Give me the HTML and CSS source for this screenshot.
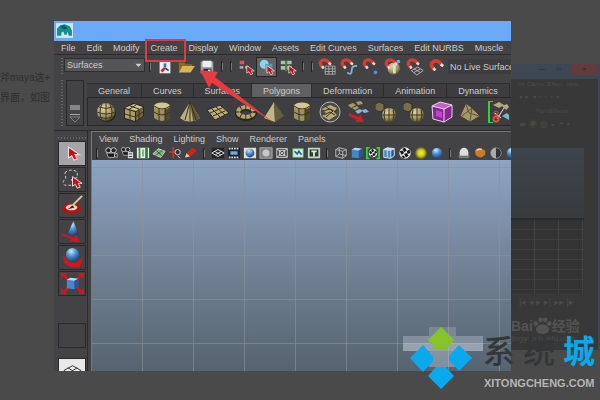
FILE: index.html
```html
<!DOCTYPE html>
<html lang="en">
<head>
    <meta charset="UTF-8">
    <title>Maya Create Menu</title>
    <link rel="stylesheet" href="styles.css">
</head>
<body>

<!-- shared icon shapes -->
<svg class="defs" aria-hidden="true">
    <defs>
        <radialGradient id="gold" cx=".38" cy=".3" r=".8"><stop offset="0" stop-color="#e0d6a4"/><stop offset=".55" stop-color="#a39864"/><stop offset="1" stop-color="#3c361d"/></radialGradient>
        <radialGradient id="blue" cx=".4" cy=".25" r=".8"><stop offset="0" stop-color="#cfe8fb"/><stop offset=".45" stop-color="#4d92d2"/><stop offset="1" stop-color="#173f7c"/></radialGradient>
        <radialGradient id="yellow"><stop offset="0" stop-color="#f4ef22"/><stop offset=".5" stop-color="#d3cf1c"/><stop offset="1" stop-color="#56561f"/></radialGradient>
    </defs>
    <symbol id="cursor" viewBox="0 0 12 14"><path d="M1 1v10l3-2 2 4 3-1-2-4h4z" fill="#c4101c" stroke="#f0dada" stroke-width="1"/></symbol>
    <symbol id="magnet" viewBox="0 0 20 20"><path d="M6 12 3.500 9Q1.500 5 5 3t7 1l3 3" fill="none" stroke="#d83a34" stroke-width="4"/><path d="m5 10 2 3M13 6l3 2" stroke="#e8dede" stroke-width="3"/></symbol>
    <symbol id="sphere" viewBox="0 0 22 22"><ellipse cx="12" cy="13" rx="9" ry="8" fill="#242424"/><circle cx="11" cy="11" r="9" fill="url(#gold)"/><path d="M2 11q9 4 18 0M4 6q7 3 14 0M4 16q7 3 14 0M11 2v18M7 3q-4 8 0 16M15 3q4 8 0 16" fill="none" stroke="#403a20"/></symbol>
    <symbol id="cube" viewBox="0 0 22 22"><path d="M1 7 10 2l11 3v10l-8 6-12-3z" fill="#2a2718"/><path d="m2 7 9-4 9 3-7 4z" fill="#d2c893"/><path d="m2 8 10 3v9L2 17z" fill="#aaa06c"/><path d="m13 11 7-5v9l-7 5z" fill="#6f6740"/><path d="M7 5l9 3v10M11 3M5 9l8-5M7 9v10M2 13l10 3 8-5" fill="none" stroke="#38321c"/></symbol>
    <symbol id="cylinder" viewBox="0 0 22 22"><path d="M3 5v12q8 6 16 0V5z" fill="#9b915f"/><path d="M14 7v13q4-1 5-3V5z" fill="#514a2c"/><ellipse cx="11" cy="5" rx="8" ry="3.500" fill="#d2c893"/><path d="M3 5q8 6 16 0M3 11q8 6 16 0M8 8v12M14 8v12" fill="none" stroke="#38321c"/></symbol>
    <symbol id="cone" viewBox="0 0 22 22"><path d="M11 1 1 17q9 7 20 0z" fill="#b9ae7a"/><path d="M11 1l3 19q5-1 7-3z" fill="#5f5735"/><path d="M11 1 6 19M11 1v19M11 1l6 18" stroke="#38321c"/></symbol>
    <symbol id="plane" viewBox="0 0 22 22"><path d="m0 9 13-5 9 8-14 7z" fill="#b9ae7a" stroke="#2f2a17"/><path d="m4 7 9 9M9 6l9 8M3 12l12-5M6 15l12-5" stroke="#38321c"/></symbol>
    <symbol id="torus" viewBox="0 0 22 22"><ellipse cx="11" cy="12" rx="8" ry="5" fill="none" stroke="#2b2715" stroke-width="6"/><ellipse cx="11" cy="11" rx="8" ry="5" fill="none" stroke="#b2a774" stroke-width="4"/><ellipse cx="11" cy="11" rx="8" ry="5" fill="none" stroke="#38321c" stroke-width="4" stroke-dasharray="1 4"/></symbol>
    <symbol id="pyramid" viewBox="0 0 22 22"><path d="M11 1 1 17l11 4z" fill="#c2b784"/><path d="m11 1 1 20 9-6z" fill="#665e3a"/></symbol>
    <symbol id="ringed" viewBox="0 0 22 22"><circle cx="11" cy="11" r="10" fill="#4c4a42" stroke="#b8b8b8"/><path d="m3 8 8-4 7 3-3 4 3 3-8 5-7-4 4-3z" fill="#b5aa77"/><path d="m4 10 7-2 6 3M5 14l6-3 5 3M7 6l7 4-7 6" fill="none" stroke="#38321c"/></symbol>
    <symbol id="split" viewBox="0 0 22 22"><path d="m1 4 5-2 3 2-5 3zM9 1l5-1 2 3-5 1zM5 7l5-2 2 2-4 2z" fill="#a59a68"/><path d="m8 10 5-2 3 2-5 3zM15 9l4-1 3 3-5 1z" fill="#8ab6cc"/><path d="m2 12 10 4 1-3 4 8h-9l2-2-8-4z" fill="#d51c29"/></symbol>
    <symbol id="merge" viewBox="0 0 22 22"><path d="m0 3 4-2 5 2v6l-4 2-5-2z" fill="#756d4b" stroke="#33301f"/><circle cx="14" cy="14" r="7" fill="url(#gold)"/><path d="M7 14h14M14 7v14M10 9q-2 5 0 10M18 9q2 5 0 10" fill="none" stroke="#403a20"/></symbol>
    <symbol id="purple" viewBox="0 0 22 22"><path d="m1 5 8-4 12 3v12l-8 5-11-3z" fill="#8b2596"/><path d="m1 5 12 3 8-4-12-3z" fill="#bd63c4"/><path d="m1 5 12 3 8-4-12-3zM2 18l11 3V8M13 21l8-5V4M1 5l1 13" fill="none" stroke="#ead5ed"/><path d="m5 9 6 2v6l-6-2z" fill="#bf43cc"/></symbol>
    <symbol id="fold" viewBox="0 0 22 22"><path d="m1 15 6-13 6 5 8 8-10 6z" fill="#a3986a" stroke="#4a432a"/><path d="m3 15 10-8-2 13M7 3l3 9 10 3" fill="none" stroke="#5c5435"/></symbol>
    <symbol id="cut" viewBox="0 0 22 22"><path d="M6 0H2v22h4" fill="none" stroke="#2bd33e" stroke-width="2"/><path d="m6 4 6-3 5 3-5 3zM15 5l5-2 2 3-3 3z" fill="#b5aa77"/><path d="m8 12 6 5M17 7l-7 11" stroke="#ddd"/><circle cx="9" cy="18" r="2.500" fill="none" stroke="#dd5030" stroke-width="2"/><circle cx="9" cy="12" r="2" fill="none" stroke="#dd5030"/><path d="m15 15 5-3 2 2v5z" fill="#7ab4cf"/></symbol>
    <symbol id="camera" viewBox="0 0 16 16"><circle cx="5" cy="5" r="3" fill="#222" stroke="#ddd"/><circle cx="11" cy="5" r="3" fill="#222" stroke="#ddd"/><path d="M3 8h9v5H5zM12 10l3-2v5l-3-1z" fill="#191919" stroke="#bbb"/></symbol>
    <symbol id="checker" viewBox="0 0 16 16"><circle cx="8" cy="8" r="6.500" fill="#e8e8e8"/><path d="m5 3 3-1 2 3-3 2zM10 6l3-2 1 4-3 1zM2 6l3-1 2 3-3 2zM7 9l3-1 2 3-3 2zM4 11l3 0 1 3-2 0z" fill="#161616"/></symbol>
    <symbol id="ball" viewBox="0 0 16 16"><circle cx="8" cy="8" r="6" fill="url(#blue)"/></symbol>
    <symbol id="bluecube" viewBox="0 0 16 16"><path d="m2 4 4-2 8 1v8l-4 3-8-1z" fill="#4687c8"/><path d="m2 4 4-2 8 1-4 2z" fill="#b3d8f5"/><path d="M10 5v9l4-3V3z" fill="#275793"/></symbol>
</svg>

<!-- dimmed page behind the window -->
<div class="backdrop">
    <div class="article" lang="zh">
        <p>斧maya这+</p>
        <p>界面，如图</p>
    </div>
    <div class="back-window">
        <div class="back-title"><i>—</i><i>▭</i><b>×</b></div>
        <div class="back-menu">nts Cache&nbsp; Effect&nbsp; Help</div>
        <div class="back-tools">▪ ▪ &nbsp;▪ ▫ ◦ ▫ ▪</div>
        <div class="back-tab">PaintEffects</div>
        <div class="back-shelf">▰ ◉ ◍ ◒ ◓ ▪</div>
        <div class="back-view"></div>
        <div class="back-graph"></div>
        <div class="back-play">|◂ ◂ ▸ ▸| ▸▸ |▸</div>
        <div class="back-brand" lang="zh">Bai<svg viewBox="0 0 20 20"><ellipse cx="10" cy="14" rx="7" ry="5"/><circle cx="3" cy="8" r="2.500"/><circle cx="8" cy="4" r="2.500"/><circle cx="13" cy="4" r="2.500"/><circle cx="17" cy="8" r="2.500"/></svg>经验</div>
        <div class="back-url">jingyan.baidu.com</div>
    </div>
</div>

<div class="app">
    <div class="titlebar">
        <svg viewBox="0 0 16 14"><path d="M0 0h16v14H0z" fill="#cfe6ec"/><path d="M1 12V5l3-3 4-1 5 2 2 4v5h-3l-1-4-1 3H8L7 8l-2 1v3z" fill="#158e91"/><path d="m4 3 4-1 3 3-4 1z" fill="#085a60"/></svg>
    </div>

    <nav class="menubar">
        <a href="#">File</a><a href="#">Edit</a><a href="#">Modify</a><a href="#" class="create">Create<span class="highlight"></span></a><a href="#">Display</a><a href="#">Window</a><a href="#">Assets</a><a href="#">Edit Curves</a><a href="#">Surfaces</a><a href="#">Edit NURBS</a><a href="#">Muscle</a>
    </nav>

    <div class="toolbar">
        <span class="grip"></span>
        <div class="mode">
            <select aria-label="Menu set"><option>Surfaces</option></select>
            <svg viewBox="0 0 9 6"><path d="M0 1h9L4.500 6z" fill="#d0d0d0"/></svg>
        </div>
        <span class="sep"></span>
        <button aria-label="New scene"><svg viewBox="0 0 20 20"><path d="M4 4h12v13H4z" fill="#eee"/><path d="M10 10V6" stroke="#3472d8" stroke-width="3"/><path d="m10 11-4 4" stroke="#d22" stroke-width="3"/><path d="m10 11 4 3" stroke="#25468a" stroke-width="2"/></svg></button>
        <button aria-label="Open scene"><svg viewBox="0 0 20 20"><path d="M2 15V5h6l2 2h7v3" fill="#8d6b1d"/><path d="m2 16 4-7h14l-5 7z" fill="#d8b455"/></svg></button>
        <button aria-label="Save scene"><svg viewBox="0 0 20 20"><path d="M3 4h14v13H3z" fill="#9ba0a5"/><path d="M5 3h10v7H5z" fill="#eee"/><path d="M6 12h9v5H6z" fill="#25282b"/><path d="M11 13h3v3h-3z" fill="#ddd"/></svg></button>
        <span class="sep"></span><span class="sep"></span>
        <button aria-label="Select by hierarchy"><svg viewBox="0 0 20 20"><path d="M3 3h5v4H3z" fill="#d6565d"/><path d="M3 9h4v3H3zM9 9h4v3H9z" fill="#aaa"/><use href="#cursor" x="10" y="7" width="10" height="13"/></svg></button>
        <button class="active" aria-label="Select by object"><svg viewBox="0 0 20 20"><circle cx="7" cy="7" r="5" fill="#94cfe9"/><path d="m8 7 8-1v8l-8 1z" fill="#4f9cab"/><use href="#cursor" x="9" y="7" width="10" height="13"/></svg></button>
        <button aria-label="Select by component"><svg viewBox="0 0 20 20"><path d="M2 3h5v4H2zM9 3h5v4H9zM2 9h5v4H2zM9 9h5v4H9z" fill="#a9c3a8"/><path d="M7 3h2v12H7z" fill="#45874c"/><use href="#cursor" x="10" y="7" width="10" height="13"/></svg></button>
        <span class="sep"></span><span class="sep"></span>
        <button class="snap" aria-label="Snap to grids"><svg viewBox="0 0 20 20"><path d="M8 9h11v9H8zM12 9v9M16 9v9M8 12h11M8 15h11" fill="none" stroke="#aaa"/><use href="#magnet" width="18" height="18"/></svg></button>
        <button class="snap" aria-label="Snap to curves"><svg viewBox="0 0 20 20"><path d="M8 16q5 4 5-2t6-5" fill="none" stroke="#83b6d8" stroke-width="2"/><use href="#magnet" width="18" height="18"/></svg></button>
        <button class="snap" aria-label="Snap to points"><svg viewBox="0 0 20 20"><circle cx="15" cy="16" r="2" fill="#4c92e0"/><use href="#magnet" width="18" height="18"/></svg></button>
        <button class="snap" aria-label="Snap to centre"><svg viewBox="0 0 20 20"><circle cx="11" cy="12" r="7" fill="url(#gold)"/><path d="M10 5h3v12h-3z" fill="#ddd"/><circle cx="16" cy="4" r="2" fill="#69b5e8"/><use href="#magnet" width="18" height="18"/></svg></button>
        <button class="snap" aria-label="Snap to view planes"><svg viewBox="0 0 20 20"><path d="m6 14 7-4 6 4-7 5zM9 12l7 4M16 12l-7 4" fill="none" stroke="#bbb"/><use href="#magnet" width="18" height="18"/></svg></button>
        <button class="snap" aria-label="Make live"><svg viewBox="0 0 20 20"><use href="#magnet" x="1" y="1" width="20" height="20"/></svg></button>
        <input type="text" aria-label="Live surface" value="No Live Surface" readonly>
    </div>

    <div class="shelf">
        <span class="grip"></span>
        <div class="shelf-side">
            <span class="knob"></span>
            <svg viewBox="0 0 14 8"><path d="M1 1h12L7 7z" fill="none" stroke="#8a8a8a"/></svg>
        </div>
        <div class="shelf-main">
            <div class="tabs">
                <button>General</button><button>Curves</button><button>Surfaces</button><button class="current">Polygons</button><button>Deformation</button><button>Animation</button><button>Dynamics</button>
            </div>
            <div class="shelf-icons">
                <button aria-label="Sphere"><svg><use href="#sphere"/></svg></button>
                <button aria-label="Cube"><svg><use href="#cube"/></svg></button>
                <button aria-label="Cylinder"><svg><use href="#cylinder"/></svg></button>
                <button aria-label="Cone"><svg><use href="#cone"/></svg></button>
                <button aria-label="Plane"><svg><use href="#plane"/></svg></button>
                <button aria-label="Torus"><svg><use href="#torus"/></svg></button>
                <button aria-label="Pyramid"><svg><use href="#pyramid"/></svg></button>
                <button aria-label="Pipe"><svg><use href="#cylinder"/></svg></button>
                <button aria-label="Combine"><svg><use href="#ringed"/></svg></button>
                <button aria-label="Extract"><svg><use href="#split"/></svg></button>
                <button aria-label="Union"><svg><use href="#merge"/></svg></button>
                <button aria-label="Smooth"><svg><use href="#merge"/></svg></button>
                <button aria-label="Bevel"><svg><use href="#purple"/></svg></button>
                <button aria-label="Extrude"><svg><use href="#fold"/></svg></button>
                <button aria-label="Split polygon"><svg><use href="#cut"/></svg></button>
            </div>
        </div>
    </div>

    <div class="workspace">
        <div class="toolbox">
            <span class="grip-row"></span>
            <button class="selected" aria-label="Select"><svg viewBox="0 0 24 24"><use href="#cursor" x="6" y="4" width="15" height="16"/></svg></button>
            <button aria-label="Lasso"><svg viewBox="0 0 24 24"><path d="M4 5q5-5 13-1v6l-6 2 2 6H4q-4-3 1-7z" fill="none" stroke="#ccc" stroke-dasharray="3 2"/><use href="#cursor" x="11" y="8" width="12" height="14"/></svg></button>
            <button aria-label="Paint select"><svg viewBox="0 0 24 24"><ellipse cx="11" cy="15" rx="10" ry="6" fill="#ad1519"/><ellipse cx="11" cy="14" rx="6" ry="3" fill="#e8d8bd"/><path d="m10 14 12-12" stroke="#d9c899" stroke-width="2"/><path d="m7 16 5-4 2 2z" fill="#29221b"/></svg></button>
            <button aria-label="Move"><svg viewBox="0 0 24 24"><path d="m1 14 13 4 1-3 5 8-11-1 2-2-10-4z" fill="#c91922"/><path d="m13 1-6 13q6 4 11 0z" fill="url(#blue)"/></svg></button>
            <button aria-label="Rotate"><svg viewBox="0 0 24 24"><path d="M3 10q-3 9 8 12h9l3-10-5 3q-4 4-10 1z" fill="#c91922"/><circle cx="12" cy="9" r="7" fill="url(#blue)"/></svg></button>
            <button aria-label="Scale"><svg viewBox="0 0 24 24"><path d="M0 1h7L5 3l4 5-2 2-4-5-3 2zM24 1h-7l2 2-4 5 2 2 4-5 3 2zM0 23h7l-2-2 4-5-2-2-4 5-3-2zM24 23h-7l2-2-4-5 2-2 4 5 3-2z" fill="#cf1620"/><use href="#bluecube" x="4" y="4" width="16" height="16"/></svg></button>
            <span class="spacer"></span>
            <button aria-label="Last tool"></button>
            <button class="layout" aria-label="Single view"><svg viewBox="0 0 24 24"><path d="m3 12 9-5 9 5-9 5zM7 9l9 6M17 9l-9 6M2 14l10 6 10-6" fill="none" stroke="#333"/></svg></button>
        </div>

        <div class="panel">
            <div class="panel-menu">
                <a href="#">View</a><a href="#">Shading</a><a href="#">Lighting</a><a href="#">Show</a><a href="#">Renderer</a><a href="#">Panels</a>
            </div>
            <div class="panel-icons">
                <span class="sep"></span>
                <button aria-label="Select camera"><svg><use href="#camera"/></svg></button>
                <button aria-label="Camera attributes"><svg viewBox="0 0 16 16"><use href="#camera" width="13" height="13"/><path d="M9 7h6v7H9z" fill="#ddd"/><path d="M10 9h4M10 12h4" stroke="#333"/></svg></button>
                <button aria-label="Bookmarks"><svg viewBox="0 0 16 16"><path d="M1 2h14v12H1z" fill="#e4eee3"/><path d="M4 2v12" stroke="#259c36" stroke-width="2"/><path d="M8 4v8" stroke="#444"/><path d="M12 2v12" stroke="#178b29" stroke-width="3"/></svg></button>
                <button aria-label="Image plane"><svg viewBox="0 0 16 16"><path d="m1 9 6-6 8 3-5 7z" fill="#82b36e" stroke="#d0e2bd"/><path d="m4 11 8-6M5 5l6 6" stroke="#2c4e7d"/></svg></button>
                <button aria-label="Pan and zoom"><svg viewBox="0 0 16 16"><path d="M6 1v13M1 7h11" stroke="#c93329" stroke-width="2"/><circle cx="11" cy="7" r="3" fill="#333" stroke="#ddd"/><path d="m11 11 3 3" stroke="#ddd"/></svg></button>
                <button aria-label="Grease pencil"><svg viewBox="0 0 16 16"><path d="m1 13 2-5 4 4z" fill="#e8c8a7"/><path d="m3 8 7-6 5 3-8 7z" fill="#c92620"/></svg></button>
                <span class="sep"></span>
                <button aria-label="Grid"><svg viewBox="0 0 16 16"><path d="M1 2h14v12H1z" fill="#252525"/><path d="m1 8 7-4 7 4-7 4zM4 6l7 4M12 6l-7 4" fill="none" stroke="#eee"/></svg></button>
                <button aria-label="Film gate"><svg viewBox="0 0 16 16"><path d="M1 2h14v12H1z" fill="#18222c"/><path d="M2 3h12M2 13h12" stroke="#ddd" stroke-width="2" stroke-dasharray="2 1"/><path d="M4 6h8v4H4z" fill="#78a9d0"/></svg></button>
                <button aria-label="Resolution gate"><svg viewBox="0 0 16 16"><path d="M1 2h14v12H1z" fill="#ddd"/><circle cx="8" cy="8" r="5" fill="url(#blue)"/></svg></button>
                <button aria-label="Gate mask"><svg viewBox="0 0 16 16"><path d="M1 2h14v12H1z" fill="#808080" stroke="#aaa"/><circle cx="8" cy="8" r="4" fill="#c7c7c7"/></svg></button>
                <button aria-label="Field chart"><svg viewBox="0 0 16 16"><path d="M2 3h12v10H2zM2 3l12 10M14 3 2 13M5 5h6v6H5z" fill="none" stroke="#ddd"/></svg></button>
                <button aria-label="Safe action"><svg viewBox="0 0 16 16"><path d="M2 3h12v10H2z" fill="#dce9e5" stroke="#55a565"/><path d="m4 6 3 3 2-3 3 4" fill="none" stroke="#266995" stroke-width="2"/></svg></button>
                <button aria-label="Safe title"><svg viewBox="0 0 16 16"><path d="M2 3h12v10H2z" fill="#303830" stroke="#b9ddb9" stroke-width="2"/><path d="M5 6h6M8 6v6" stroke="#eee" stroke-width="2"/></svg></button>
                <span class="sep"></span>
                <button aria-label="Wireframe"><svg viewBox="0 0 16 16"><path d="m2 4 4-2 8 2v7l-4 3-8-2zM2 4l8 2 4-2M10 6v8M6 2v7l-4 3M6 9l8 2" fill="none" stroke="#bbb"/></svg></button>
                <button aria-label="Shaded"><svg><use href="#bluecube"/></svg></button>
                <button aria-label="Default material"><svg viewBox="0 0 16 16"><path d="M4 2H1v12h3M12 2h3v12h-3" fill="none" stroke="#30d33b" stroke-width="2"/><use href="#checker" x="2" y="2" width="12" height="12"/></svg></button>
                <button aria-label="Wireframe on shaded"><svg viewBox="0 0 16 16"><use href="#bluecube" width="16" height="16"/><path d="m2 4 8 1 4-2M10 5v9M2 4v9l8 1 4-3V3L6 2zM6 4v9" fill="none" stroke="#ddecf6"/></svg></button>
                <button aria-label="Textured"><svg><use href="#checker"/></svg></button>
                <button aria-label="Use all lights"><svg viewBox="0 0 16 16"><circle cx="8" cy="8" r="7" fill="url(#yellow)"/></svg></button>
                <button aria-label="Shadows"><svg><use href="#ball"/></svg></button>
                <span class="sep"></span>
                <button aria-label="High quality"><svg viewBox="0 0 16 16"><path d="M1 11h14l-2 3H3z" fill="#777"/><path d="M3 11V7q1-5 5-5t5 5v4z" fill="#ddd"/></svg></button>
                <button aria-label="Isolate select"><svg viewBox="0 0 16 16"><path d="M2 5q5-4 12 0v5q-6 6-11 0z" fill="#ca7a28"/><path d="M4 5q3-2 6-1" stroke="#f3d09b" stroke-width="2" fill="none"/></svg></button>
                <button aria-label="X-Ray"><svg viewBox="0 0 16 16"><circle cx="8" cy="8" r="6" fill="#333" stroke="#888"/><path d="M8 2a6 6 0 0 0 0 12z" fill="#aaa"/></svg></button>
                <button aria-label="X-Ray joints"><svg><use href="#ball"/></svg></button>
            </div>
            <div class="viewport"></div>
        </div>
    </div>
</div>

<!-- red arrow pointing at the Create menu -->
<svg class="arrow" viewBox="0 0 76 56"><path d="M1 2 19 4l-3 5 59 46L13 15l-3 5z" fill="#e83b40"/></svg>

<div class="watermark">
    <svg viewBox="0 0 80 64">
        <g fill="#c8d0dc">
            <path d="M26 0h27v9H26z" opacity=".25"/>
            <path d="M0 9h81v7H0z" opacity=".35"/>
            <path d="M0 16h81v8H0z" opacity=".55"/>
            <path d="M26 24h27v16H26z" opacity=".4"/>
        </g>
        <path d="m38 0 13 13-8 10H33L25 13z" fill="#86c229"/>
        <path d="m20 18 10 12v4L20 45 7 31zM56 18l13 13-13 13-10-11v-4zM33 40h10l8 9-13 13-13-13z" fill="#09a9ed"/>
    </svg>
    <div class="brand">
        <div class="brand-name" lang="zh"><span>系</span><span>统</span><span class="city">城</span></div>
        <div class="brand-url">XITONGCHENG.COM</div>
    </div>
</div>

</body>
</html>
```
FILE: styles.css
```css
* {
    box-sizing: border-box;
}
body {
    margin: 0;
    height: 100vh;
    padding: 21px 89px 29px 54px;
    position: relative;
    overflow: hidden;
    background: #4a4a4a;
    color: #cbcbcb;
    font: 9px/12px "Liberation Sans", "Noto Sans CJK SC", sans-serif;
}
a {
    color: inherit;
    text-decoration: none;
}
button, input, select {
    margin: 0;
    padding: 0;
    border: 0;
    background: none;
    color: inherit;
    font: inherit;
}
button {
    display: flex;
    flex: none;
    align-items: center;
    justify-content: center;
}
svg {
    display: block;
}
.defs {
    position: absolute;
    width: 0;
    height: 0;
}

/* dimmed page */
.backdrop {
    position: absolute;
    inset: 0;
    display: flex;
    justify-content: space-between;
    padding-top: 64px;
}
.article {
    width: 54px;
    padding-top: 4px;
    overflow: hidden;
    white-space: nowrap;
    color: #303030;
    font-size: 10px;
    line-height: 20px;
}
.article p {
    margin: 0;
}
.back-window {
    width: 89px;
    height: 286px;
    overflow: hidden;
    background: #383838;
    border-right: 2px solid #3d4854;
    color: #4b4b4b;
    font-size: 6px;
    line-height: 10px;
    white-space: nowrap;
}
.back-title {
    display: flex;
    justify-content: flex-end;
    gap: 10px;
    height: 15px;
    background: #3d4854;
    color: #262d34;
}
.back-title b {
    width: 27px;
    height: 11px;
    background: #633b3b;
    text-align: center;
}
.back-menu {
    height: 10px;
    padding-left: 6px;
}
.back-tools, .back-shelf {
    height: 17px;
    padding-left: 8px;
    font-size: 9px;
    line-height: 17px;
}
.back-tab {
    height: 10px;
    padding-left: 25px;
}
.back-shelf {
    height: 32px;
    color: #4b473c;
}
.back-view {
    height: 72px;
    margin-right: 14px;
    background: linear-gradient(#3f454c, #373b3e);
    border-bottom: 2px solid #292c2e;
}
.back-graph {
    height: 73px;
    margin-right: 14px;
    background:
        repeating-linear-gradient(90deg, #0000 0 23px, #414141 23px 24px),
        repeating-linear-gradient(#333 0 9px, #3e3e3e 9px 10px);
}
.back-play {
    height: 24px;
    padding-left: 8px;
    font-size: 9px;
    line-height: 18px;
}
.back-brand {
    display: flex;
    align-items: center;
    height: 17px;
    color: #535353;
    font-size: 14px;
    font-weight: bold;
}
.back-brand svg {
    width: 19px;
    height: 19px;
    fill: #535353;
}
.back-url {
    font-size: 8px;
}

/* application window */
.app {
    position: relative;
    display: flex;
    flex-direction: column;
    height: 100%;
    overflow: hidden;
    background: #434345;
}
.titlebar {
    flex: none;
    height: 20px;
    padding: 2px;
    background: #6aaaf8;
}
.titlebar svg {
    width: 17px;
    height: 15px;
}
.menubar {
    display: flex;
    flex: none;
    gap: 11px;
    height: 14px;
    padding: 1px 7px;
    border-bottom: 1px solid #2c2c2e;
    white-space: nowrap;
}
.create {
    position: relative;
}
.highlight {
    position: absolute;
    inset: -3px -8px -9px -6px;
    border: 2px solid #e03a3e;
}
.grip {
    flex: none;
    width: 10px;
    background: repeating-linear-gradient(#666 0 1px, #0000 1px 3px) 7px 0 / 2px 100% no-repeat;
}
.toolbar {
    display: flex;
    flex: none;
    align-items: center;
    height: 23px;
}
.toolbar .grip {
    height: 17px;
}
.mode {
    position: relative;
    display: flex;
    flex: none;
    width: 81px;
    height: 14px;
    margin-bottom: 4px;
    background: #555557;
    border: 1px solid #303032;
}
.mode select {
    width: 100%;
    padding-left: 2px;
    appearance: none;
}
.mode svg {
    position: absolute;
    right: 2px;
    top: 4px;
    width: 7px;
    height: 4px;
}
.sep {
    flex: none;
    width: 9px;
    height: 11px;
    background: linear-gradient(#222, #222) 4px 0 / 1px 100% no-repeat, linear-gradient(#777, #777) 5px 2px / 1px 7px no-repeat;
}
.toolbar button {
    width: 21px;
    height: 20px;
}
.toolbar button svg {
    width: 18px;
    height: 18px;
}
.toolbar .snap {
    width: 22px;
}
.toolbar .active {
    background: #626466;
    border: 1px solid #262626;
}
.toolbar input {
    flex: 1;
    min-width: 0;
    height: 15px;
    padding-left: 2px;
    background: #3c3c3e;
}

/* shelf */
.shelf {
    display: flex;
    flex: none;
    height: 53px;
    padding: 2px 0 4px;
    border-bottom: 1px solid #29292b;
}
.shelf-side {
    display: flex;
    flex: none;
    flex-direction: column;
    align-items: center;
    justify-content: flex-end;
    gap: 6px;
    width: 18px;
    margin: 0 3px 0 2px;
    padding-bottom: 2px;
    border: 1px solid #29292b;
}
.knob {
    width: 10px;
    height: 5px;
    background: #858587;
    box-shadow: 0 4px #434345, 0 5px #aaa;
}
.shelf-side svg {
    width: 12px;
    height: 7px;
}
.shelf-main {
    flex: 1;
    min-width: 0;
}
.tabs {
    display: flex;
    height: 17px;
    padding-top: 3px;
}
.tabs button {
    padding: 0 11px;
    background: #3d3d3f;
    border: 1px solid #2d2d2f;
    border-width: 1px 1px 0 0;
}
.tabs .current {
    background: #606062;
}
.shelf-icons {
    display: flex;
    height: 29px;
    padding-left: 4px;
    overflow: hidden;
    background: #3e3e40;
    border: 1px solid #28282a;
    border-right: 0;
}
.shelf-icons button {
    width: 28px;
}
.shelf-icons svg {
    width: 22px;
    height: 22px;
}

/* toolbox */
.workspace {
    display: flex;
    flex: 1;
    min-height: 0;
}
.toolbox {
    display: flex;
    flex: none;
    flex-direction: column;
    gap: 1px;
    width: 34px;
    padding: 6px 1px 0 4px;
    overflow: hidden;
    border-right: 1px solid #2b2b2d;
}
.grip-row {
    flex: none;
    height: 2px;
    margin-bottom: 1px;
    background: repeating-linear-gradient(90deg, #666 0 1px, #0000 1px 3px);
}
.toolbox button {
    height: 25px;
    border: 1px solid #29292b;
}
.toolbox button svg {
    width: 23px;
    height: 23px;
}
.toolbox .selected {
    background: #a5a5a7;
}
.toolbox .layout {
    margin-top: 9px;
    background: #e8e8e8;
}
.spacer {
    flex: none;
    height: 25px;
}

/* view panel */
.panel {
    display: flex;
    flex: 1;
    flex-direction: column;
    min-width: 0;
    margin-left: 3px;
    border: 1px solid #77777a;
    border-width: 1px 0 0 1px;
}
.panel-menu {
    display: flex;
    flex: none;
    gap: 11px;
    height: 14px;
    padding: 1px 7px;
}
.panel-icons {
    display: flex;
    flex: none;
    align-items: center;
    height: 14px;
    overflow: hidden;
}
.panel-icons .sep {
    width: 11px;
}
.panel-icons button {
    width: 16px;
}
.panel-icons svg {
    width: 14px;
    height: 14px;
}
.viewport {
    flex: 1;
    background:
        repeating-linear-gradient(90deg, #0000 0 50px, #8b939b99 50px 51px) 0 0,
        repeating-linear-gradient(#0000 0 43px, #8b939b99 43px 44px) 0 -36px / 100% 440px,
        linear-gradient(#8da5c3, #738296 50%, #55646f);
}

/* annotations */
.arrow {
    position: absolute;
    left: 199px;
    top: 68px;
    width: 76px;
    height: 56px;
}
.watermark {
    position: absolute;
    right: 5px;
    bottom: 9px;
    display: flex;
}
.watermark svg {
    width: 80px;
    height: 64px;
}
.brand-name {
    display: flex;
    gap: 8px;
    height: 44px;
    color: #343638;
    font: 500 32px/44px "Noto Sans CJK SC", sans-serif;
}
.brand-name .city {
    color: #09a9ed;
    font-weight: bold;
}
.brand-url {
    padding: 6px 0 0 1px;
    color: #b5b5b5;
    font-size: 11px;
    font-weight: bold;
}
```
